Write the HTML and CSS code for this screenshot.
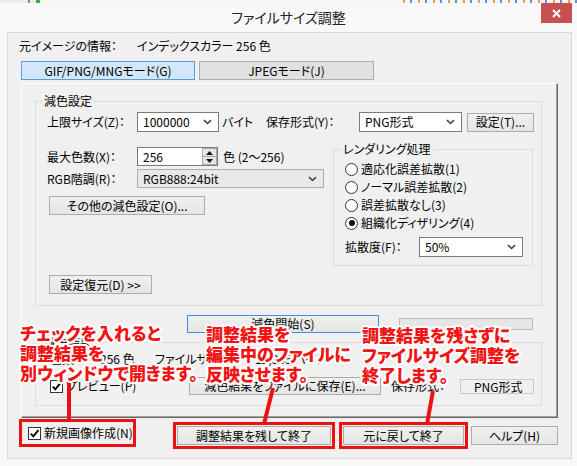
FILE: index.html
```html
<!DOCTYPE html>
<html lang="ja">
<head>
<meta charset="utf-8">
<title>ファイルサイズ調整</title>
<link rel="stylesheet" href="styles.css">
</head>
<body>
<div class="window">
  <div class="strip">
    <span class="strip-line"></span><span class="strip-dot"></span>
    <span class="strip-spacer"></span>
    <span class="strip-bits"></span>
  </div>
  <header class="titlebar">
    <span></span>
    <h1 class="title">ファイルサイズ調整</h1>
    <span class="close"><svg width="9" height="9" viewBox="0 0 9 9"><path d="M1 1 L8 8 M8 1 L1 8" stroke="#fff" stroke-width="2"/></svg></span>
  </header>

  <main class="client">
    <div class="info"><span class="info-label">元イメージの情報：</span><span>インデックスカラー 256 色</span></div>

    <div class="tabs">
      <div class="tab tab-active">GIF/PNG/MNGモード(G)</div>
      <div class="tab tab-plain">JPEGモード(J)</div>
    </div>

    <section class="panel">
      <div class="group group-reduce">
        <div class="legend">減色設定</div>
        <div class="row row1">
          <span class="lbl w-lab1">上限サイズ(Z)：</span>
          <span class="combo edit w-size">1000000<svg class="chev" width="9" height="6" viewBox="0 0 9 6"><path d="M1 1.2 L4.5 4.5 L8 1.2" fill="none" stroke="#444" stroke-width="1.6"/></svg></span>
          <span class="lbl unit">バイト</span>
          <span class="lbl w-lab2">保存形式(Y)：</span>
          <span class="combo edit w-fmt">PNG形式<svg class="chev" width="9" height="6" viewBox="0 0 9 6"><path d="M1 1.2 L4.5 4.5 L8 1.2" fill="none" stroke="#444" stroke-width="1.6"/></svg></span>
          <span class="btn w-set">設定(T)...</span>
        </div>

        <div class="split">
          <div class="left">
            <div class="row row2">
              <span class="lbl w-lab1">最大色数(X)：</span>
              <span class="spin">
                <span class="spin-text">256</span>
                <span class="spin-btns">
                  <span class="spin-up"><svg width="7" height="4" viewBox="0 0 7 4"><path d="M0 4 L3.5 0 L7 4Z" fill="#111"/></svg></span>
                  <span class="spin-down"><svg width="7" height="4" viewBox="0 0 7 4"><path d="M0 0 L3.5 4 L7 0Z" fill="#111"/></svg></span>
                </span>
              </span>
              <span class="lbl range">色 (2〜256)</span>
            </div>
            <div class="row row3">
              <span class="lbl w-lab1">RGB階調(R)：</span>
              <span class="combo list w-rgb">RGB888:24bit<svg class="chev" width="9" height="6" viewBox="0 0 9 6"><path d="M1 1.2 L4.5 4.5 L8 1.2" fill="none" stroke="#444" stroke-width="1.6"/></svg></span>
            </div>
            <div class="row row4">
              <span class="btn w-other">その他の減色設定(O)...</span>
            </div>
            <div class="row row5">
              <span class="btn w-restore">設定復元(D) &gt;&gt;</span>
            </div>
          </div>

          <div class="group group-render">
            <div class="legend">レンダリング処理</div>
            <div class="radios">
              <div class="radio-row"><span class="radio"></span><span class="rtext">適応化誤差拡散(1)</span></div>
              <div class="radio-row"><span class="radio"></span><span class="rtext">ノーマル誤差拡散(2)</span></div>
              <div class="radio-row"><span class="radio"></span><span class="rtext">誤差拡散なし(3)</span></div>
              <div class="radio-row"><span class="radio radio-on"></span><span class="rtext">組織化ディザリング(4)</span></div>
            </div>
            <div class="row diff-row">
              <span class="lbl w-diff">拡散度(F)：</span>
              <span class="combo edit w-pct">50%<svg class="chev" width="9" height="6" viewBox="0 0 9 6"><path d="M1 1.2 L4.5 4.5 L8 1.2" fill="none" stroke="#444" stroke-width="1.6"/></svg></span>
            </div>
          </div>
        </div>
      </div>

      <div class="row start-row">
        <span class="btn btn-default w-start">減色開始(S)</span>
        <span class="progress"></span>
      </div>

      <div class="group group-result">
        <div class="legend">減色結果</div>
        <div class="row rowA">
          <span class="lbl w-cnt">色数：</span>
          <span class="lbl w-cval">256 色</span>
          <span class="lbl w-fs">ファイルサイズ：</span>
          <span class="lbl">12,345 バイト</span>
        </div>
        <div class="row rowB">
          <span class="check-wrap w-prev"><span class="check"><svg width="11" height="11" viewBox="0 0 11 11"><path d="M1.8 5.6 L4.3 8.3 L9.4 2.2" fill="none" stroke="#000" stroke-width="1.9"/></svg></span><span class="ctext">プレビュー(P)</span></span>
          <span class="btn w-save">減色結果をファイルに保存(E)...</span>
          <span class="lbl w-fmt2">保存形式：</span>
          <span class="static">PNG形式</span>
        </div>
      </div>
    </section>

    <div class="row bottom-row">
      <span class="check-wrap mark new-image"><span class="check"><svg width="11" height="11" viewBox="0 0 11 11"><path d="M1.8 5.6 L4.3 8.3 L9.4 2.2" fill="none" stroke="#000" stroke-width="1.9"/></svg></span><span class="ctext">新規画像作成(N)</span></span>
      <span class="btn mark w-keep">調整結果を残して終了</span>
      <span class="btn mark w-undo">元に戻して終了</span>
      <span class="btn w-help">ヘルプ(H)</span>
    </div>
  </main>
</div>

<svg class="callout-lines" width="577" height="466" viewBox="0 0 577 466">
  <path d="M69 382 L69 420" stroke="#ee1111" stroke-width="4"/>
  <path d="M273 388 L264 424" stroke="#ee1111" stroke-width="4"/>
  <path d="M433 391 L427 424" stroke="#ee1111" stroke-width="4"/>
</svg>
<div class="annot annot-1">チェックを入れると<br>調整結果を<br>別ウィンドウで開きます。</div>
<div class="annot annot-2">調整結果を<br>編集中のファイルに<br>反映させます。</div>
<div class="annot annot-3">調整結果を残さずに<br>ファイルサイズ調整を<br>終了します。</div>
</body>
</html>
```

FILE: styles.css
```css
* { box-sizing: border-box; }
html, body { margin: 0; padding: 0; }
body {
  width: 577px;
  height: 466px;
  overflow: hidden;
  position: relative;
  background: #f8f8f8;
  font-family: "Noto Sans CJK JP", "Noto Sans", sans-serif;
  font-size: 12px;
  color: #000;
  font-feature-settings: "palt";
}
.window { width: 577px; height: 466px; display: flex; flex-direction: column; }

/* background app strip */
.strip { height: 3px; display: flex; background: #ececec; }
.strip-line { width: 2px; margin-left: 28px; background: #8a8a8a; }
.strip-dot { width: 4px; margin-left: 6px; background: #3cb043; }
.strip-spacer { flex: 1; background: #f6f6f6; }
.strip-bits { width: 180px; background: repeating-linear-gradient(90deg, #f6f6f6 0 6px, #e8a050 6px 8px, #f6f6f6 8px 13px, #6d8fc7 13px 15px); }

/* title bar */
.titlebar { height: 29px; display: grid; grid-template-columns: 1fr auto 1fr; align-items: start; }
.title { margin: 0; font-size: 14px; font-weight: normal; line-height: 29px; color: #222; }
.close {
  justify-self: end; margin-right: 5px;
  width: 31px; height: 20px; background: #c75050;
  display: flex; align-items: center; justify-content: center;
}

/* client */
.client {
  margin-left: 7px; width: 565px; height: 427px;
  border: 1px solid #d9d9d9; background: #f0f0f0;
}
.info { margin: 5px 0 0 11px; height: 16px; line-height: 16px; display: flex; }
.info-label { width: 118px; }

.tabs { display: flex; gap: 4px; margin: 7px 0 0 13px; }
.tab { height: 19px; line-height: 17px; text-align: center; border: 1px solid #adadad; background: #e1e1e1; }
.tab-active { width: 174px; background: #d3e7fa; border-color: #5a9be0; }
.tab-plain { width: 175px; }

.panel {
  margin: 3px 0 0 13px; width: 537px; height: 335px;
  border: 1px solid; border-color: #ffffff #696969 #696969 #ffffff;
  box-shadow: inset -1px -1px 0 #a0a0a0;
}

/* group boxes */
.group { border: 1px solid #dcdcdc; }
.legend { margin: -9px 0 0 6px; padding: 0 2px; width: max-content; height: 16px; line-height: 16px; background: #f0f0f0; }
.group-reduce { margin: 17px 0 0 13px; width: 507px; height: 205px; }
.group-render { margin-top: 17px; width: 200px; height: 117px; }
.group-result { margin: 9px 0 0 13px; width: 507px; height: 64px; }
.group-render .legend { margin-left: 7px; }

.row { display: flex; align-items: center; }
.lbl { white-space: nowrap; line-height: 16px; }
.row1 { margin-top: 3px; height: 20px; padding-left: 11px; }
.split { display: flex; padding-left: 11px; }
.left { width: 286px; }
.row2 { margin-top: 15px; height: 19px; }
.row3 { margin-top: 3px; height: 19px; }
.row4 { margin-top: 8px; height: 19px; padding-left: 2px; }
.row5 { margin-top: 60px; height: 19px; padding-left: 2px; }

.w-lab1 { width: 90px; }
.unit { width: 44px; margin-left: 3px; }
.w-lab2 { width: 93px; }
.w-size { width: 82px; height: 20px; }
.w-fmt { width: 103px; height: 20px; }
.w-set { width: 67px; height: 20px; margin-left: 5px; }
.w-rgb { width: 187px; height: 19px; }
.w-other { width: 156px; }
.w-restore { width: 103px; }
.range { margin-left: 5px; }

/* controls */
.combo {
  display: flex; align-items: center; justify-content: space-between;
  padding: 0 6px 0 5px; line-height: 16px; white-space: nowrap;
}
.combo.edit { background: #fff; border: 1px solid #7a7a7a; }
.combo.list { background: #e8e8e8; border: 1px solid #acacac; }
.chev { flex: none; }

.spin { width: 81px; height: 19px; display: flex; background: #fff; border: 1px solid #7a7a7a; }
.spin-text { flex: 1; padding-left: 5px; line-height: 17px; }
.spin-btns { width: 15px; display: flex; flex-direction: column; }
.spin-up, .spin-down {
  flex: 1; display: flex; align-items: center; justify-content: center;
  background: #e6e6e6; border: 1px solid #a8a8a8;
}
.spin-down { border-top: none; }

.btn {
  display: flex; align-items: center; justify-content: center;
  height: 19px; white-space: nowrap; line-height: 16px;
  border: 1px solid #acacac; background: linear-gradient(#f0f0f0, #e5e5e5);
}
.btn-default { border-color: #3c8ee8; height: 18px; }

.radios { margin-top: 3px; }
.radio-row { height: 18px; display: flex; align-items: center; padding-left: 11px; }
.radio {
  width: 13px; height: 13px; border-radius: 50%;
  border: 1px solid #333; background: #fff;
  display: flex; align-items: center; justify-content: center;
}
.radio-on::after { content: ""; width: 6px; height: 6px; border-radius: 50%; background: #111; }
.rtext { margin-left: 3px; line-height: 16px; white-space: nowrap; }
.diff-row { margin-top: 5px; height: 20px; padding-left: 11px; }
.w-diff { width: 74px; }
.w-pct { width: 104px; height: 20px; }

.start-row { margin-top: 9px; height: 18px; padding-left: 165px; }
.w-start { width: 192px; }
.progress { width: 134px; height: 12px; margin-left: 20px; border: 1px solid #bcbcbc; background: #e6e6e6; }

.rowA { margin-top: 1px; height: 16px; padding-left: 14px; }
.w-cnt { width: 50px; }
.w-cval { width: 55px; }
.w-fs { width: 100px; }
.rowB { margin-top: 10px; height: 18px; padding-left: 14px; }
.w-prev { width: 139px; }
.w-save { width: 192px; height: 18px; }
.w-fmt2 { width: 69px; margin-left: 10px; }
.static { width: 74px; height: 15px; border: 1px solid #c8c8c8; line-height: 13px; padding-left: 13px; white-space: nowrap; }

.check-wrap { display: flex; align-items: center; }
.check {
  width: 13px; height: 13px; border: 1px solid #333; background: #fff;
  display: flex; align-items: center; justify-content: center; flex: none;
}
.ctext { margin-left: 3px; line-height: 16px; white-space: nowrap; }

/* bottom */
.bottom-row { margin-top: 8px; height: 19px; }
.new-image { width: 111px; height: 22px; margin-left: 14px; padding-left: 6px; align-self: flex-start; margin-top: -4px; }
.w-keep { width: 154px; margin-left: 44px; }
.w-undo { width: 121px; margin-left: 12px; }
.w-help { width: 87px; margin-left: 7px; }
.mark { outline: 3px solid #ee1111; outline-offset: 1px; }
.new-image.mark { outline-offset: 0; }

/* annotations */
.callout-lines { position: absolute; left: 0; top: 0; pointer-events: none; }
.annot {
  position: absolute;
  font-size: 17px; font-weight: 900; line-height: 20px;
  color: #f01414; white-space: nowrap;
  font-feature-settings: "palt";
  text-shadow:
    -2px 0 0 #fff, 2px 0 0 #fff, 0 -2px 0 #fff, 0 2px 0 #fff,
    -1px -1px 0 #fff, 1px -1px 0 #fff, -1px 1px 0 #fff, 1px 1px 0 #fff,
    -2px -1px 0 #fff, 2px -1px 0 #fff, -2px 1px 0 #fff, 2px 1px 0 #fff,
    -1px -2px 0 #fff, 1px -2px 0 #fff, -1px 2px 0 #fff, 1px 2px 0 #fff;
}
.annot-1 { left: 20px; top: 323px; }
.annot-2 { left: 206px; top: 324px; }
.annot-3 { left: 362px; top: 325px; }
```
